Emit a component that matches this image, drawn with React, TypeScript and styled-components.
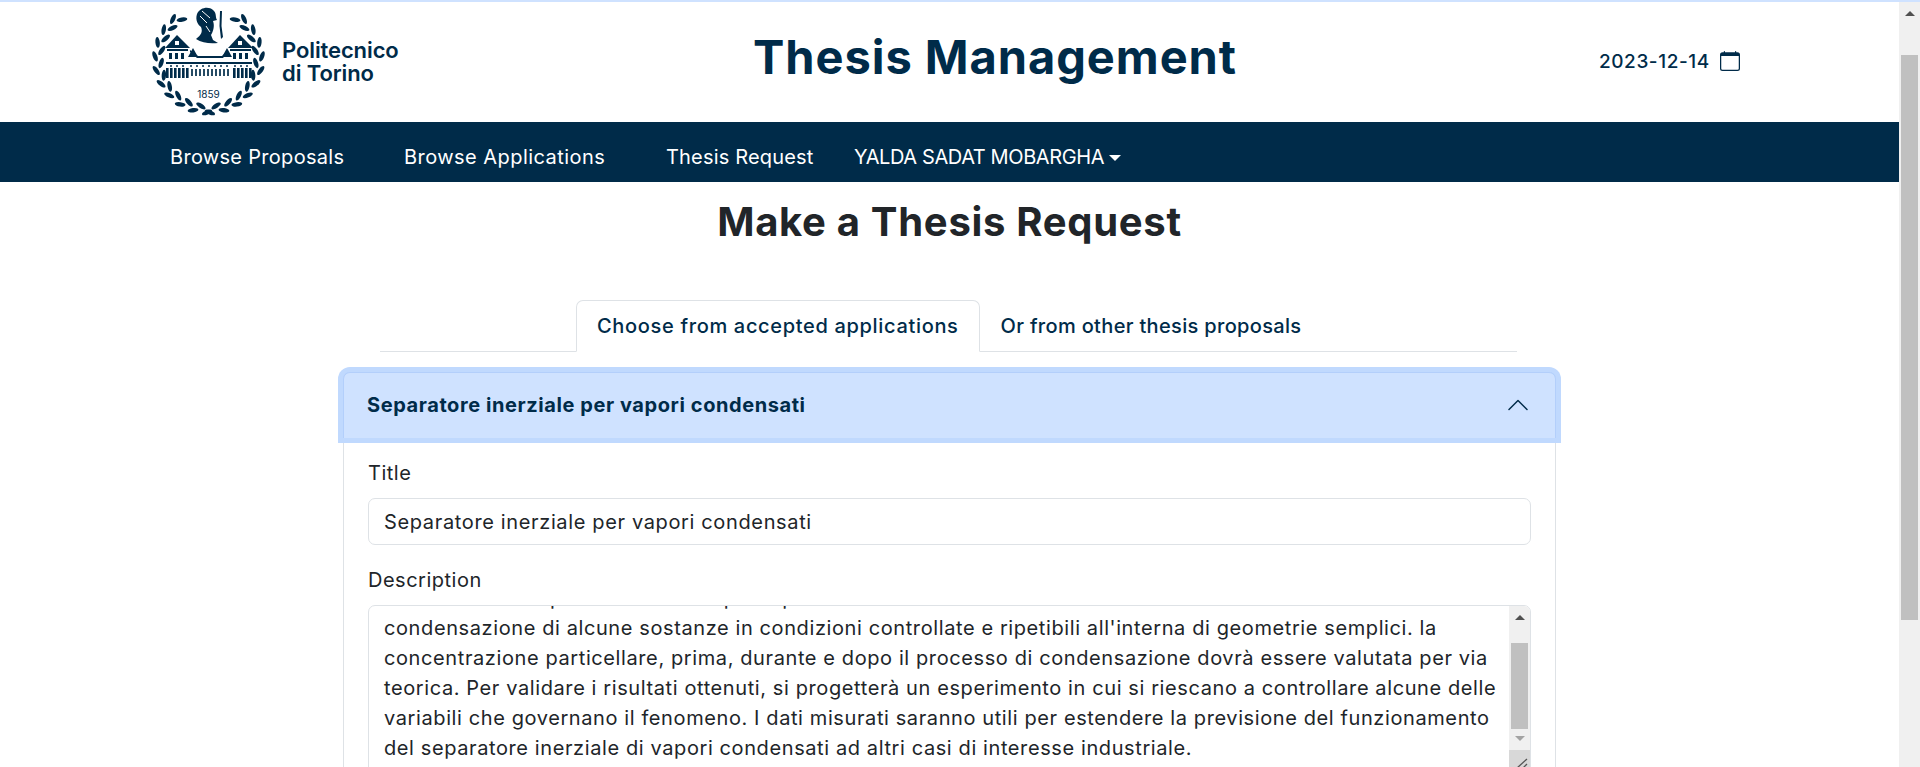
import React from "react";
import styled, { createGlobalStyle } from "styled-components";

const navy = "#002b49";

const GlobalStyle = createGlobalStyle`
	html, body {
		margin: 0;
		padding: 0;
		height: 100%;
		overflow: hidden;
		background: #fff;
	}
	body {
		font-family: "Inter", "Liberation Sans", sans-serif;
		color: #212529;
	}
	* {
		box-sizing: border-box;
	}
`;

const Shell = styled.div`
	display: flex;
	width: 1920px;
	height: 767px;
	overflow: hidden;
	border-top: 2px solid #cfe2ff;
`;

const Page = styled.main`
	flex: 1;
	min-width: 0;
	overflow: hidden;
`;

const PageScrollbar = styled.div`
	width: 21px;
	flex: none;
	background: #f0f0f0;
	padding: 4px 2px 0;
	display: flex;
	flex-direction: column;
`;

const ArrowUp = styled.div`
	width: 0;
	height: 0;
	align-self: center;
	margin-top: 5px;
	border-left: 5px solid transparent;
	border-right: 5px solid transparent;
	border-bottom: 5px solid #505050;
`;

const ArrowDown = styled.div`
	width: 0;
	height: 0;
	align-self: center;
	margin-top: 7px;
	border-left: 5px solid transparent;
	border-right: 5px solid transparent;
	border-top: 5px solid #a3a3a3;
`;

const PageThumb = styled.div`
	margin-top: 39px;
	height: 565px;
	background: #c0c0c0;
`;

const Header = styled.header`
	height: 120px;
	display: flex;
	align-items: center;
	padding-left: 150px;
`;

const Brand = styled.div`
	display: flex;
	align-items: center;
	width: 603px;
	gap: 14px;
`;

const BrandName = styled.div`
	font-weight: 600;
	font-size: 22px;
	line-height: 23px;
	letter-spacing: -0.1px;
	color: ${navy};
`;

const AppTitle = styled.h1`
	margin: 0 0 11px;
	width: 483px;
	white-space: nowrap;
	font-size: 47px;
	font-weight: 700;
	letter-spacing: 0.95px;
	color: ${navy};
	text-align: center;
`;

const DateBox = styled.div`
	display: flex;
	align-items: center;
	gap: 10px;
	margin-left: 363px;
	margin-bottom: 2px;
	font-size: 19px;
	font-weight: 500;
	color: ${navy};
	letter-spacing: 0.57px;
`;

const NavBar = styled.nav`
	height: 60px;
	background: ${navy};
	display: flex;
	align-items: center;
	padding: 10px 0 0 170px;
	color: #fff;
	font-size: 20px;
`;

const NavLink = styled.a<{ $w: number; $ls: number }>`
	display: block;
	width: ${(p) => p.$w}px;
	white-space: nowrap;
	color: #fff;
	letter-spacing: ${(p) => p.$ls}px;
`;

const Caret = styled.span`
	display: inline-block;
	margin-left: 5px;
	vertical-align: 3px;
	border-top: 6px solid #fff;
	border-left: 6px solid transparent;
	border-right: 6px solid transparent;
`;

const Heading = styled.h2`
	margin: 16px 0 0;
	text-align: center;
	font-size: 40px;
	line-height: 48px;
	font-weight: 700;
	letter-spacing: 0.7px;
	color: #212529;
`;

const Content = styled.div`
	width: 1223px;
	margin: 0 0 0 338px;
	padding: 0 5px;
`;

const Tabs = styled.div`
	display: flex;
	margin: 54px 39px 0 37px;
	padding-left: 196px;
	border-bottom: 1px solid #dee2e6;
	height: 52px;
`;

const Tab = styled.div<{ $active?: boolean; $ls: number }>`
	height: 52px;
	padding: 0 20px;
	display: flex;
	align-items: center;
	white-space: nowrap;
	font-size: 20px;
	font-weight: 500;
	letter-spacing: ${(p) => p.$ls}px;
	color: ${navy};
	border: 1px solid ${(p) => (p.$active ? "#dee2e6" : "transparent")};
	border-bottom-color: ${(p) => (p.$active ? "#fff" : "transparent")};
	border-radius: 7px 7px 0 0;
	background: ${(p) => (p.$active ? "#fff" : "transparent")};
`;

const Accordion = styled.section`
	margin-top: 20px;
	border: 1px solid #dee2e6;
	border-bottom: none;
	border-radius: 7px 7px 0 0;
`;

const AccordionHeader = styled.div`
	position: relative;
	z-index: 1;
	margin: -1px;
	height: 66px;
	padding: 0 26px 0 24px;
	display: flex;
	align-items: center;
	justify-content: space-between;
	background: #cfe2ff;
	border-radius: 7px 7px 0 0;
	box-shadow: inset 0 1px 0 #b3cffb, inset 1px 0 0 #b3cffb, inset -1px 0 0 #b3cffb, 0 0 0 5px #c0d9fe;
	font-weight: 700;
	font-size: 20px;
	letter-spacing: 0.58px;
	color: ${navy};
`;

const AccordionBody = styled.div`
	padding: 20px 24px 0;
`;

const Label = styled.label`
	display: block;
	font-size: 20px;
	line-height: 30px;
	padding-top: 1px;
	height: 30px;
	margin-bottom: 11px;
	letter-spacing: 0.5px;
	color: #212529;
`;

const TextInput = styled.input`
	display: block;
	width: 100%;
	height: 47px;
	padding: 0 15px;
	border: 1px solid #dee2e6;
	border-radius: 7px;
	font: 400 20px "Inter", sans-serif;
	letter-spacing: 0.64px;
	color: #212529;
	outline: none;
	margin-bottom: 19px;
`;

const TextBox = styled.div`
	display: flex;
	height: 180px;
	border: 1px solid #dee2e6;
	border-radius: 7px;
	overflow: hidden;
`;

const TextLines = styled.div`
	flex: 1;
	min-width: 0;
	overflow: hidden;
	padding: 0 15px;
	font-size: 20px;
	line-height: 30px;
	letter-spacing: 0.6px;
	color: #212529;
`;

const TextLine = styled.div<{ $cut?: boolean }>`
	white-space: nowrap;
	${(p) => (p.$cut ? "margin-top: -23px;" : "")}
`;

const BoxScrollbar = styled.div`
	width: 21px;
	flex: none;
	background: #f0f0f0;
	display: flex;
	flex-direction: column;
	padding-top: 4px;
`;

const BoxThumb = styled.div`
	margin: 23px 2px 0;
	height: 86px;
	flex: none;
	background: #c0c0c0;
`;

const Resizer = styled.div`
	margin-top: 9px;
	height: 20px;
	flex: none;
	background: #d8d8d8;
	display: flex;
	justify-content: flex-end;
	padding-top: 8px;
`;

const Leaves = ({ side }: { side: 1 | -1 }) => {
	const cx = 58.5;
	const cy = 53;
	const out: React.ReactElement[] = [];
	for (let i = 0; i < 20; i++) {
		const deg = -56 + i * 7.6;
		const a = (deg * Math.PI) / 180;
		const outer = i % 2 === 1;
		const r = outer ? 53.5 : 47.5;
		const x = cx + side * Math.cos(a) * r;
		const y = cy + Math.sin(a) * r;
		const rot = deg + (outer ? 24 : -24);
		out.push(
			<ellipse
				key={i}
				cx={x}
				cy={y}
				rx={2.2}
				ry={5.4}
				transform={`rotate(${side * rot} ${x} ${y})`}
			/>
		);
	}
	return <>{out}</>;
};

const Logo = () => (
	<svg width="118" height="112" viewBox="0 0 118 112" fill={navy}>
		<Leaves side={1} />
		<Leaves side={-1} />
		{/* helmeted figure */}
		<path d="M47 8 C50 1 59 0 63 4 C67 7 65 11 67 14 L63 15 C65 20 63 26 61 29 L63 34 L68 37 C60 38 52 37 46 33 C51 29 53 26 51 21 C48 19 45 14 47 8 Z" />
		<path d="M52 5 L60 12 M50 10 L57 17 M56 20 L60 26" stroke="#fff" strokeWidth="1" fill="none" />
		<path d="M70 5 L72 5 L71.5 20 L73 31 L71 33 L69.5 20 Z" />
		{/* palace */}
		<path d="M15 42 L27 29 L40 42 Z" />
		<path d="M78 42 L90 29 L103 42 Z" />
		<rect x="25" y="35" width="4" height="4" fill="#fff" />
		<rect x="88" y="35" width="4" height="4" fill="#fff" />
		<path d="M38 51 L43 42 L48 51 Z M72 51 L77 42 L82 51 Z" />
		<path d="M40 44 L48 50 L72 50 L78 44 L78 46 L73 52 L47 52 L40 46 Z" />
		<rect x="17" y="43" width="21" height="2" />
		<rect x="80" y="43" width="21" height="2" />
		{[19, 25, 31, 83, 89, 95].map((x) => (
			<rect key={x} x={x} y={47} width={3} height={6} />
		))}
		<rect x="16" y="56" width="86" height="2" />
		{[20, 26, 32, 40, 46, 52, 58, 64, 70, 76, 84, 90, 96].map((x) => (
			<rect key={x} x={x} y={59} width={2} height={2} opacity={0.75} />
		))}
		{[16, 20, 24, 28, 32, 36, 83, 87, 91, 95, 99].map((x) => (
			<rect key={x} x={x} y={62} width={2.6} height={10} />
		))}
		{[41, 45, 49, 53, 57, 61, 65, 69, 73, 77].map((x) => (
			<rect key={x} x={x} y={63} width={2} height={7} opacity={0.85} />
		))}
		<text x="58.5" y="92" textAnchor="middle" fontFamily="Inter, sans-serif" fontSize="10" fill={navy}>
			1859
		</text>
	</svg>
);

const CalendarIcon = () => (
	<svg width="20" height="20" viewBox="0 0 16 16" fill={navy}>
		<path d="M3.5 0a.5.5 0 0 1 .5.5V1h8V.5a.5.5 0 0 1 1 0V1h1a2 2 0 0 1 2 2v11a2 2 0 0 1-2 2H2a2 2 0 0 1-2-2V3a2 2 0 0 1 2-2h1V.5a.5.5 0 0 1 .5-.5zM1 4v10a1 1 0 0 0 1 1h12a1 1 0 0 0 1-1V4H1z" />
	</svg>
);

const Chevron = () => (
	<svg width="24" height="24" viewBox="0 0 16 16" fill={navy}>
		<path
			fillRule="evenodd"
			d="M1.646 11.354a.5.5 0 0 0 .708 0L8 5.707l5.646 5.647a.5.5 0 0 0 .708-.708l-6-6a.5.5 0 0 0-.708 0l-6 6a.5.5 0 0 0 0 .708z"
		/>
	</svg>
);

const GripIcon = () => (
	<svg width="14" height="12" viewBox="0 0 14 12" stroke="#555" strokeWidth="1.3">
		<path d="M1 10 L11 1 M7 10 L11 6" />
	</svg>
);

const descriptionLines = [
	"Il lavoro intende prima studiare la parte più teorica della",
	"condensazione di alcune sostanze in condizioni controllate e ripetibili all'interna di geometrie semplici. la",
	"concentrazione particellare, prima, durante e dopo il processo di condensazione dovrà essere valutata per via",
	"teorica. Per validare i risultati ottenuti, si progetterà un esperimento in cui si riescano a controllare alcune delle",
	"variabili che governano il fenomeno. I dati misurati saranno utili per estendere la previsione del funzionamento",
	"del separatore inerziale di vapori condensati ad altri casi di interesse industriale.",
];

export default function App() {
	return (
		<>
			<GlobalStyle />
			<Shell>
				<Page>
					<Header>
						<Brand>
							<Logo />
							<BrandName>
								Politecnico
								<br />
								di Torino
							</BrandName>
						</Brand>
						<AppTitle>Thesis Management</AppTitle>
						<DateBox>
							2023-12-14
							<CalendarIcon />
						</DateBox>
					</Header>
					<NavBar>
						<NavLink $w={234} $ls={0.3}>Browse Proposals</NavLink>
						<NavLink $w={262} $ls={0.45}>Browse Applications</NavLink>
						<NavLink $w={188} $ls={0.17}>Thesis Request</NavLink>
						<NavLink $w={270} $ls={-0.4}>
							YALDA SADAT MOBARGHA
							<Caret />
						</NavLink>
					</NavBar>
					<Heading>Make a Thesis Request</Heading>
					<Content>
						<Tabs>
							<Tab $active $ls={0.67}>Choose from accepted applications</Tab>
							<Tab $ls={0.33}>Or from other thesis proposals</Tab>
						</Tabs>
						<Accordion>
							<AccordionHeader>
								Separatore inerziale per vapori condensati
								<Chevron />
							</AccordionHeader>
							<AccordionBody>
								<Label>Title</Label>
								<TextInput readOnly value="Separatore inerziale per vapori condensati" />
								<Label>Description</Label>
								<TextBox>
									<TextLines>
										{descriptionLines.map((line, i) => (
											<TextLine key={i} $cut={i === 0}>
												{line}
											</TextLine>
										))}
									</TextLines>
									<BoxScrollbar>
										<ArrowUp />
										<BoxThumb />
										<ArrowDown />
										<Resizer>
											<GripIcon />
										</Resizer>
									</BoxScrollbar>
								</TextBox>
							</AccordionBody>
						</Accordion>
					</Content>
				</Page>
				<PageScrollbar>
					<ArrowUp />
					<PageThumb />
				</PageScrollbar>
			</Shell>
		</>
	);
}
